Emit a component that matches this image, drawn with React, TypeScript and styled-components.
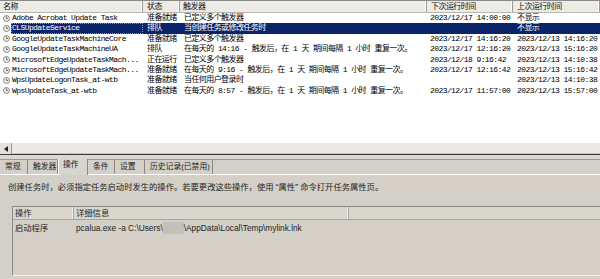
import React from 'react';
import styled, { createGlobalStyle, css } from 'styled-components';

const GlobalStyle = createGlobalStyle`
  html, body { margin: 0; padding: 0; background: #d4d0c8; }
  #root { width: 600px; height: 279px; overflow: hidden; }
`;

const Window = styled.div`
  width: 600px;
  height: 279px;
  display: flex;
  flex-direction: column;
  background: #d4d0c8;
  overflow: hidden;
`;

const ListPane = styled.div`
  height: 155px;
  box-sizing: border-box;
  display: flex;
  flex-direction: column;
  background: #ffffff;
  border-top: 1px solid #8a8a8a;
  border-bottom: 1px solid #3a3a3a;
`;

const cols = css`
  display: grid;
  grid-template-columns: 143px 37px 247px 86px 1fr;
`;

const Header = styled.div`
  ${cols};
  height: 11px;
  background: #ecebe6;
  border-bottom: 1px solid #b8b6ae;
  font-family: "Liberation Mono", "Noto Sans CJK SC", monospace;
  font-size: 8px;
  letter-spacing: -0.55px;
  color: #111;
`;

const HeaderCell = styled.div`
  line-height: 11px;
  padding-left: ${p => p.$pad}px;
  border-right: 1px solid #9c9a93;
  box-shadow: inset -1px 0 0 #ffffff;
  white-space: nowrap;
  overflow: hidden;
`;

const Row = styled.div`
  ${cols};
  height: 10.4px;
  font-family: "Liberation Mono", "Noto Sans CJK SC", monospace;
  font-size: 8px;
  letter-spacing: -0.58px;
  line-height: 10.4px;
  color: ${p => (p.$selected ? '#ffffff' : '#000000')};
`;

const Cell = styled.div`
  padding-left: ${p => p.$pad}px;
  white-space: nowrap;
  overflow: hidden;
  background: ${p => (p.$selected ? '#0a246a' : 'transparent')};
`;

const NameCell = styled.div`
  display: flex;
  align-items: center;
  white-space: nowrap;
  overflow: hidden;
`;

const IconBox = styled.span`
  width: 11px;
  flex: none;
  display: flex;
  align-items: center;
  padding-left: 3px;
  box-sizing: border-box;
`;

const NameLabel = styled.span`
  flex: 1;
  padding-left: 1px;
  height: 10.4px;
  overflow: hidden;
  background: ${p => (p.$selected ? '#0a246a' : 'transparent')};
  ${p => p.$selected && css`outline: 1px dotted #8c95b8; outline-offset: -1px;`}
`;

const Blank = styled.div`
  flex: 1;
`;

const HScroll = styled.div`
  height: 11px;
  display: flex;
  background: #f3f2ee;
  border-top: 1px solid #ffffff;
`;

const ScrollBtn = styled.div`
  width: 12px;
  box-sizing: border-box;
  display: flex;
  align-items: center;
  justify-content: center;
  background: #e4e2dc;
  border-right: 1px solid #9a988f;
`;

const Thumb = styled.div`
  flex: 1;
  background: #ebe9e4;
  border-bottom: 1px solid #c8c6bf;
`;

const Splitter = styled.div`
  height: 4px;
  background: #dcd9d2;
  border-bottom: 1px solid #9c9992;
`;

const TabStrip = styled.div`
  height: 14px;
  display: flex;
  align-items: flex-end;
  position: relative;
  z-index: 1;
  font-family: "Liberation Sans", "Noto Sans CJK SC", sans-serif;
  font-size: 7.8px;
  color: #222;
`;

const Tab = styled.div`
  width: ${p => p.$w}px;
  box-sizing: border-box;
  height: ${p => (p.$active ? 16 : 14)}px;
  padding-left: 4px;
  line-height: ${p => (p.$active ? 12 : 14)}px;
  border-right: 1px solid #8a8780;
  border-left: 1px solid ${p => (p.$active ? '#ffffff' : 'transparent')};
  background: ${p => (p.$active ? '#d8d5cd' : '#d4d0c8')};
  margin-bottom: ${p => (p.$active ? -1 : 0)}px;
  white-space: nowrap;
`;

const Panel = styled.div`
  flex: 1;
  display: flex;
  flex-direction: column;
  border-top: 1px solid #ffffff;
  background: #d4d0c8;
  padding: 6px 0 0 8px;
  font-family: "Liberation Sans", "Noto Sans CJK SC", sans-serif;
  font-size: 8.3px;
  color: #1e1e1e;
`;

const Description = styled.div`
  line-height: 12px;
  white-space: nowrap;
`;

const ActionTable = styled.div`
  margin: 13px -8px 0 4px;
  height: 70px;
  box-sizing: border-box;
  border: 1px solid #8c8982;
  border-bottom-color: #f2f1ed;
  display: flex;
  flex-direction: column;
`;

const tableCols = css`
  display: grid;
  grid-template-columns: 61px 275px 1fr;
`;

const TableHead = styled.div`
  ${tableCols};
  height: 12px;
  background: #d9d6ce;
  border-bottom: 1px solid #a9a69f;
`;

const HeadCell = styled.div`
  line-height: 12px;
  padding-left: 2px;
  border-right: 1px solid #a9a69f;
  box-shadow: inset -1px 0 0 #eeede8;
  white-space: nowrap;
`;

const TableRow = styled.div`
  ${tableCols};
  height: 14px;
  margin-top: 1px;
  line-height: 14px;
`;

const RowCell = styled.div`
  padding-left: 2px;
  white-space: nowrap;
  display: flex;
  align-items: center;
`;

const Redacted = styled.span`
  display: inline-block;
  width: 21px;
  height: 12px;
  background: #c3c0b9;
`;

const TaskIcon = () => (
  <svg width="7" height="7" viewBox="0 0 7 7">
    <circle cx="3.5" cy="3.5" r="3" fill="#ecebe8" stroke="#7d7d7d" strokeWidth="0.9" />
    <path d="M3.5 1.6 V3.5 H5.1" stroke="#555" strokeWidth="0.8" fill="none" />
  </svg>
);

const ArrowLeft = () => (
  <svg width="4" height="6" viewBox="0 0 4 6">
    <path d="M4 0 L0 3 L4 6 Z" fill="#222" />
  </svg>
);

type Task = {
  name: string;
  status: string;
  trigger: string;
  next: string;
  last: string;
  selected?: boolean;
};

const tasks: Task[] = [
  { name: 'Adobe Acrobat Update Task', status: '准备就绪', trigger: '已定义多个触发器', next: '2023/12/17 14:00:00', last: '不显示' },
  { name: 'CLSUpdateService', status: '排队', trigger: '当创建任务或修改任务时', next: '', last: '不显示', selected: true },
  { name: 'GoogleUpdateTaskMachineCore', status: '准备就绪', trigger: '已定义多个触发器', next: '2023/12/17 14:16:20', last: '2023/12/13 14:16:20' },
  { name: 'GoogleUpdateTaskMachineUA', status: '排队', trigger: '在每天的 14:16 - 触发后，在 1 天 期间每隔 1 小时 重复一次。', next: '2023/12/17 12:16:20', last: '2023/12/13 15:16:20' },
  { name: 'MicrosoftEdgeUpdateTaskMach...', status: '正在运行', trigger: '已定义多个触发器', next: '2023/12/18 9:16:42', last: '2023/12/13 14:10:38' },
  { name: 'MicrosoftEdgeUpdateTaskMach...', status: '准备就绪', trigger: '在每天的 9:16 - 触发后，在 1 天 期间每隔 1 小时 重复一次。', next: '2023/12/17 12:16:42', last: '2023/12/13 15:16:42' },
  { name: 'WpsUpdateLogonTask_at-wtb', status: '准备就绪', trigger: '当任何用户登录时', next: '', last: '2023/12/13 14:10:38' },
  { name: 'WpsUpdateTask_at-wtb', status: '准备就绪', trigger: '在每天的 8:57 - 触发后，在 1 天 期间每隔 1 小时 重复一次。', next: '2023/12/17 11:57:00', last: '2023/12/13 15:57:00' },
];

const tabs = [
  { label: '常规', w: 28 },
  { label: '触发器', w: 30 },
  { label: '操作', w: 30, active: true },
  { label: '条件', w: 27 },
  { label: '设置', w: 30 },
  { label: '历史记录(已禁用)', w: 68 },
];

export default function App() {
  return (
    <>
      <GlobalStyle />
      <Window>
        <ListPane>
          <Header>
            <HeaderCell $pad={3}>名称</HeaderCell>
            <HeaderCell $pad={4}>状态</HeaderCell>
            <HeaderCell $pad={3}>触发器</HeaderCell>
            <HeaderCell $pad={4}>下次运行时间</HeaderCell>
            <HeaderCell $pad={4}>上次运行时间</HeaderCell>
          </Header>
          {tasks.map((t, i) => (
            <Row key={i} $selected={t.selected}>
              <NameCell>
                <IconBox><TaskIcon /></IconBox>
                <NameLabel $selected={t.selected}>{t.name}</NameLabel>
              </NameCell>
              <Cell $pad={4} $selected={t.selected}>{t.status}</Cell>
              <Cell $pad={4} $selected={t.selected}>{t.trigger}</Cell>
              <Cell $pad={3} $selected={t.selected}>{t.next}</Cell>
              <Cell $pad={4} $selected={t.selected}>{t.last}</Cell>
            </Row>
          ))}
          <Blank />
          <HScroll>
            <ScrollBtn><ArrowLeft /></ScrollBtn>
            <Thumb />
          </HScroll>
        </ListPane>
        <Splitter />
        <TabStrip>
          {tabs.map(tab => (
            <Tab key={tab.label} $w={tab.w} $active={tab.active}>{tab.label}</Tab>
          ))}
        </TabStrip>
        <Panel>
          <Description>创建任务时，必须指定任务启动时发生的操作。若要更改这些操作，使用 “属性” 命令打开任务属性页。</Description>
          <ActionTable>
            <TableHead>
              <HeadCell>操作</HeadCell>
              <HeadCell>详细信息</HeadCell>
              <HeadCell />
            </TableHead>
            <TableRow>
              <RowCell>启动程序</RowCell>
              <RowCell>
                pcalua.exe -a C:\Users\<Redacted />\AppData\Local\Temp\mylink.lnk
              </RowCell>
              <RowCell />
            </TableRow>
          </ActionTable>
        </Panel>
      </Window>
    </>
  );
}
